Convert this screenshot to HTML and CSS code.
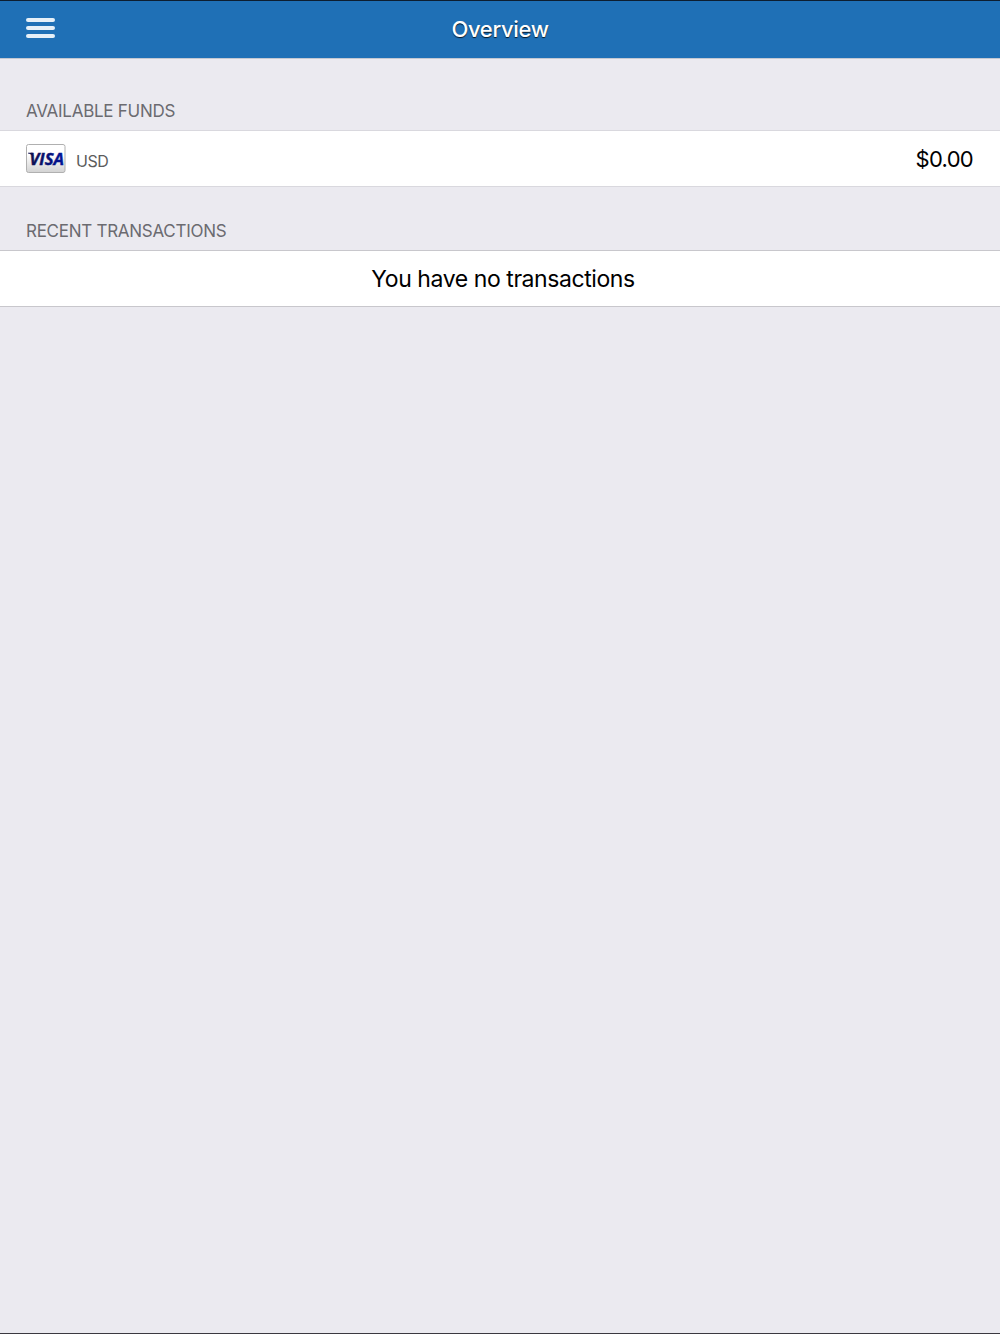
FILE: index.html
```html
<!DOCTYPE html>
<html lang="en">
<head>
    <meta charset="UTF-8">
    <meta name="viewport" content="width=device-width, initial-scale=1.0">
    <title>Overview</title>
    <link rel="stylesheet" href="styles.css">
</head>
<body>
    <header class="navbar">
        <button class="menu-btn" aria-label="Menu">
            <span class="bar"></span>
            <span class="bar"></span>
            <span class="bar"></span>
        </button>
        <h1 class="title">Overview</h1>
    </header>

    <main>
        <h2 class="section-title funds-title">AVAILABLE FUNDS</h2>
        <div class="row funds">
            <svg class="card" width="40" height="30" viewBox="0 0 40 30">
                <defs>
                    <linearGradient id="cardBg" x1="0" y1="0" x2="0" y2="1">
                        <stop offset="0.35" stop-color="#ffffff"/>
                        <stop offset="1" stop-color="#d2d2d2"/>
                    </linearGradient>
                    <linearGradient id="visaBlue" x1="0" y1="0" x2="1" y2="0">
                        <stop offset="0" stop-color="#10104e"/>
                        <stop offset="1" stop-color="#00149b"/>
                    </linearGradient>
                </defs>
                <rect x="0.5" y="0.5" width="38.5" height="28" rx="2" fill="url(#cardBg)" stroke="#b0b0b0"/>
                <text class="visa" x="3.5" y="20.5" textLength="34.5" lengthAdjust="spacingAndGlyphs" fill="url(#visaBlue)" stroke="url(#visaBlue)">VISA</text>
                <path d="M2 8.8h4.500l1 3.500C6 10.500 4 9.700 2 9.400z" fill="#10104e"/>
            </svg>
            <span class="currency">USD</span>
            <span class="amount">$0.00</span>
        </div>

        <h2 class="section-title recent-title">RECENT TRANSACTIONS</h2>
        <div class="row recent">
            <p class="empty">You have no transactions</p>
        </div>
    </main>
</body>
</html>
```
FILE: styles.css
```css
*{
    margin: 0;
    padding: 0;
    box-sizing: border-box;
}
body{
    min-height: 100vh;
    background-color: #ebeaf0;
    border-top: 1px solid #0d1e30;
    border-bottom: 1px solid #3a3840;
    font-family: Inter, "Liberation Sans", sans-serif;
    color: #000;
}
.navbar{
    display: grid;
    grid-template-columns: 1fr auto 1fr;
    align-items: center;
    height: 58px;
    padding: 0 26px;
    background-color: #1f70b6;
    border-bottom: 1px solid #c3c8d2;
}
.menu-btn{
    display: flex;
    flex-direction: column;
    gap: 4px;
    width: 29px;
    margin-bottom: 4px;
    border: none;
    background: none;
}
.bar{
    height: 4px;
    border-radius: 2px;
    background-color: #e6f0f8;
}
.title{
    margin-bottom: 2px;
    font-size: 22px;
    font-weight: 500;
    line-height: 28px;
    letter-spacing: -0.35px;
    color: #fff;
    text-shadow: 0 1px 1px rgba(0, 0, 0, 0.8);
}
.section-title{
    display: flex;
    align-items: flex-end;
    padding: 0 26px 9px;
    font-size: 17px;
    font-weight: 400;
    line-height: 20px;
    letter-spacing: -0.27px;
    color: #6b6b70;
}
.funds-title{
    height: 71px;
}
.recent-title{
    height: 63px;
}
.row{
    display: flex;
    align-items: center;
    height: 57px;
    padding: 0 26px;
    background-color: #fff;
    border-top: 1px solid #d9d8de;
    border-bottom: 1px solid #d9d8de;
}
.recent{
    border-color: #c8c7cc;
}
.card{
    margin-right: 10px;
}
.visa{
    font-family: "Open Sans", sans-serif;
    font-size: 16.5px;
    font-weight: 700;
    font-style: italic;
    stroke-width: 0.4px;
}
.currency{
    padding-top: 5px;
    font-size: 16px;
    line-height: 20px;
    letter-spacing: -0.4px;
    color: #5c5c5c;
}
.amount{
    margin-left: auto;
    padding-right: 1px;
    font-size: 22px;
    letter-spacing: -0.7px;
}
.empty{
    flex: 1;
    padding-left: 6px;
    text-align: center;
    font-size: 23px;
    letter-spacing: -0.43px;
}
```
